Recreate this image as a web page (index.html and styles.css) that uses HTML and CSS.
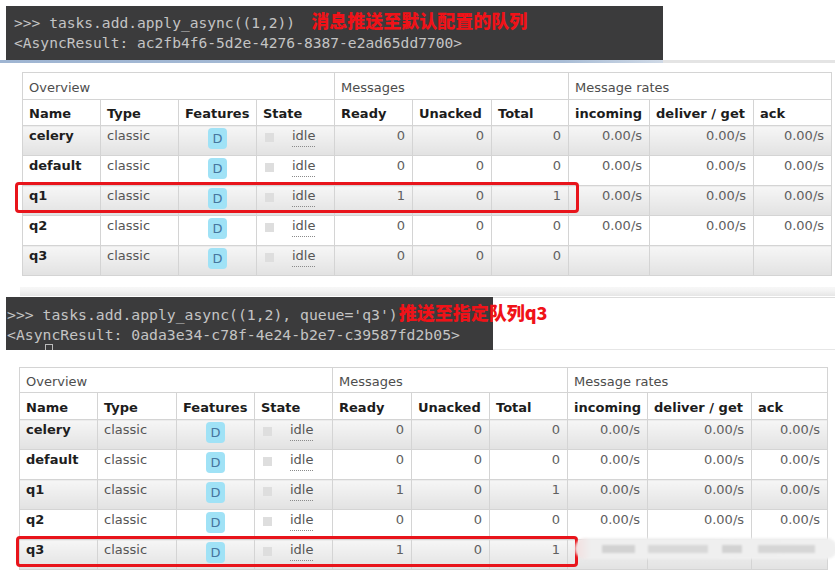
FILE: index.html
```html
<!DOCTYPE html>
<html>
<head>
<meta charset="utf-8">
<link rel="stylesheet" href="styles.css">
</head>
<body>
<div class="term-row">
  <div class="term term1">
    <div class="line">&gt;&gt;&gt; tasks.add.apply_async((1,2))<span class="note note1">消息推送至默认配置的队列</span></div>
    <div class="line">&lt;AsyncResult: ac2fb4f6-5d2e-4276-8387-e2ad65dd7700&gt;</div>
  </div>
</div>
<div class="strip1"><div class="blue"></div><div class="grey"></div></div>

<div class="table-wrap tw1">
  <table class="q t1">
    <colgroup><col style="width:78px"><col style="width:78px"><col style="width:78px"><col style="width:78px"><col style="width:78px"><col style="width:79px"><col style="width:77px"><col style="width:81px"><col style="width:104px"><col style="width:78px"></colgroup>
    <thead>
      <tr class="h1"><th colspan="4">Overview</th><th colspan="3">Messages</th><th colspan="3">Message rates</th></tr>
      <tr class="h2"><th>Name</th><th>Type</th><th>Features</th><th>State</th><th>Ready</th><th>Unacked</th><th>Total</th><th>incoming</th><th>deliver / get</th><th>ack</th></tr>
    </thead>
    <tbody>
      <tr class="odd"><td class="name">celery</td><td>classic</td><td class="feat"><span class="badge">D</span></td><td><span class="chk"></span><span class="idle">idle</span></td><td class="num">0</td><td class="num">0</td><td class="num">0</td><td class="num">0.00/s</td><td class="num">0.00/s</td><td class="num">0.00/s</td></tr>
      <tr><td class="name">default</td><td>classic</td><td class="feat"><span class="badge">D</span></td><td><span class="chk"></span><span class="idle">idle</span></td><td class="num">0</td><td class="num">0</td><td class="num">0</td><td class="num">0.00/s</td><td class="num">0.00/s</td><td class="num">0.00/s</td></tr>
      <tr class="odd"><td class="name">q1</td><td>classic</td><td class="feat"><span class="badge">D</span></td><td><span class="chk"></span><span class="idle">idle</span></td><td class="num">1</td><td class="num">0</td><td class="num">1</td><td class="num">0.00/s</td><td class="num">0.00/s</td><td class="num">0.00/s</td></tr>
      <tr><td class="name">q2</td><td>classic</td><td class="feat"><span class="badge">D</span></td><td><span class="chk"></span><span class="idle">idle</span></td><td class="num">0</td><td class="num">0</td><td class="num">0</td><td class="num">0.00/s</td><td class="num">0.00/s</td><td class="num">0.00/s</td></tr>
      <tr class="odd"><td class="name">q3</td><td>classic</td><td class="feat"><span class="badge">D</span></td><td><span class="chk"></span><span class="idle">idle</span></td><td class="num">0</td><td class="num">0</td><td class="num">0</td><td></td><td></td><td></td></tr>
    </tbody>
  </table>
  <div class="redbox rb1"></div>
</div>

<div class="sep"></div>

<div class="term-row2">
  <div class="term term2">
    <div class="line">&gt;&gt;&gt; tasks.add.apply_async((1,2), queue='q3')<span class="note note2">推送至指定队列q3</span></div>
    <div class="line">&lt;AsyncResult: 0ada3e34-c78f-4e24-b2e7-c39587fd2b05&gt;</div>
    <div class="cursor"></div>
  </div>
  <div class="filler"></div>
</div>

<div class="table-wrap tw2">
  <table class="q t2">
    <colgroup><col style="width:78px"><col style="width:79px"><col style="width:78px"><col style="width:78px"><col style="width:79px"><col style="width:78px"><col style="width:78px"><col style="width:80px"><col style="width:104px"><col style="width:76px"></colgroup>
    <thead>
      <tr class="h1"><th colspan="4">Overview</th><th colspan="3">Messages</th><th colspan="3">Message rates</th></tr>
      <tr class="h2"><th>Name</th><th>Type</th><th>Features</th><th>State</th><th>Ready</th><th>Unacked</th><th>Total</th><th>incoming</th><th>deliver / get</th><th>ack</th></tr>
    </thead>
    <tbody>
      <tr class="odd"><td class="name">celery</td><td>classic</td><td class="feat"><span class="badge">D</span></td><td><span class="chk"></span><span class="idle">idle</span></td><td class="num">0</td><td class="num">0</td><td class="num">0</td><td class="num">0.00/s</td><td class="num">0.00/s</td><td class="num">0.00/s</td></tr>
      <tr><td class="name">default</td><td>classic</td><td class="feat"><span class="badge">D</span></td><td><span class="chk"></span><span class="idle">idle</span></td><td class="num">0</td><td class="num">0</td><td class="num">0</td><td class="num">0.00/s</td><td class="num">0.00/s</td><td class="num">0.00/s</td></tr>
      <tr class="odd"><td class="name">q1</td><td>classic</td><td class="feat"><span class="badge">D</span></td><td><span class="chk"></span><span class="idle">idle</span></td><td class="num">1</td><td class="num">0</td><td class="num">1</td><td class="num">0.00/s</td><td class="num">0.00/s</td><td class="num">0.00/s</td></tr>
      <tr><td class="name">q2</td><td>classic</td><td class="feat"><span class="badge">D</span></td><td><span class="chk"></span><span class="idle">idle</span></td><td class="num">0</td><td class="num">0</td><td class="num">0</td><td class="num">0.00/s</td><td class="num">0.00/s</td><td class="num">0.00/s</td></tr>
      <tr class="odd"><td class="name">q3</td><td>classic</td><td class="feat"><span class="badge">D</span></td><td><span class="chk"></span><span class="idle">idle</span></td><td class="num">1</td><td class="num">0</td><td class="num">1</td><td></td><td></td><td></td></tr>
    </tbody>
  </table>
  <div class="redbox rb2"></div>
  <div class="blur">
    <span class="bb b1"></span><span class="bb b2"></span><span class="bb b3"></span><span class="bb b4"></span>
  </div>
</div>
</body>
</html>
```

FILE: styles.css
```css
* { box-sizing: border-box; }

html, body {
  margin: 0;
  background: #ffffff;
}

body {
  width: 835px;
  height: 571px;
  overflow: hidden;
  font-family: "DejaVu Sans", Verdana, sans-serif;
}

/* ---------- terminals ---------- */
.term-row {
  display: flex;
  padding: 6px 0 0 6px;
}

.term {
  background: #3b3b3c;
  color: #c4c4c4;
  font-family: "DejaVu Sans Mono", "Liberation Mono", monospace;
  font-size: 14.6px;
  line-height: 20px;
  white-space: nowrap;
}

.term1 {
  width: 657px;
  height: 54px;
  padding: 4px 0 0 8px;
}

.note {
  color: #f01218;
  font-family: "Noto Sans CJK SC", "DejaVu Sans", sans-serif;
  font-weight: 900;
  font-size: 18px;
  line-height: 20px;
}

.note1 { margin-left: 16px; }
.note2 { margin-left: 1px; }

.strip1 {
  display: flex;
  height: 3px;
}

.strip1 .blue {
  width: 663px;
  background: linear-gradient(to right, #9fb5d2, #a9bdd6 85%, #cfd9e6);
}

.strip1 .grey {
  flex: 1;
  background: #e4e4e4;
}

.sep {
  margin: 11px 0 0 20px;
  height: 9px;
  background: linear-gradient(#f7f7f7, #f3f3f3 40%, #e6e6e6);
}

.term-row2 {
  display: flex;
  margin-top: 1px;
}

.term2 {
  margin-left: 6px;
  width: 487px;
  height: 53px;
  padding: 5px 0 0 1px;
  font-size: 14.75px;
  position: relative;
}

.term2 .cursor {
  position: absolute;
  left: 39px;
  top: 47px;
  width: 8px;
  height: 6px;
  border: 1px solid #bbbbbb;
  border-bottom: none;
}

.filler {
  flex: 1;
  border-top: 1px solid #dcdcdc;
  border-bottom: 1px solid #e6e6e6;
}

/* ---------- tables ---------- */
.table-wrap {
  position: relative;
}

.tw1 {
  margin: 9px 0 0 22px;
}

.tw2 {
  margin: 17px 0 0 19px;
}

table.q {
  border-collapse: collapse;
  table-layout: fixed;
  font-size: 13px;
  color: #555555;
}

.t1 { width: 809px; }
.t2 { width: 808px; }

.q th,
.q td {
  border: 1px solid #d4d4d4;
  padding: 0 6px;
  vertical-align: top;
  line-height: 20px;
  text-align: left;
  white-space: nowrap;
  overflow: hidden;
}

.q .h1 th {
  font-weight: normal;
  color: #4d4d4d;
  background: #ffffff;
}

.q .h2 th {
  font-weight: bold;
  color: #1c1c1c;
  background: #ffffff;
}

.t1 .h1 { height: 27px; }
.t1 .h1 th { padding-top: 5px; }
.t1 .h2 { height: 26px; }
.t1 .h2 th { padding-top: 4px; }

.t2 .h1 { height: 25px; }
.t2 .h1 th { padding-top: 4px; }
.t2 .h2 { height: 27px; }
.t2 .h2 th { padding-top: 5px; }

.q tbody tr { height: 30px; }

.q tr.odd td {
  background: linear-gradient(#f6f6f6, #e2e2e2);
}

.q td.name {
  font-weight: bold;
  color: #1e1e1e;
}

.q td.num {
  text-align: right;
  padding-right: 7px;
  color: #606060;
}

.q td.feat {
  text-align: center;
}

.badge {
  display: inline-block;
  vertical-align: top;
  width: 19px;
  height: 21px;
  margin-top: 2px;
  padding-top: 1px;
  background: #a0e2f6;
  border-radius: 4px;
  color: #46769e;
  line-height: 20px;
  text-align: center;
}

.chk {
  display: inline-block;
  vertical-align: top;
  width: 9px;
  height: 9px;
  margin: 7px 0 0 2px;
  background: #dedede;
}

.idle {
  margin-left: 18px;
  padding-bottom: 3px;
  border-bottom: 1px dotted #8a8a8a;
  color: #555555;
}

/* ---------- overlays ---------- */
.redbox {
  position: absolute;
  border: 3px solid #e8141b;
  border-radius: 4px;
}

.rb1 {
  left: -7px;
  top: 110px;
  width: 564px;
  height: 31px;
}

.rb2 {
  left: -3px;
  top: 169px;
  width: 562px;
  height: 31px;
}

.blur {
  position: absolute;
  left: 556px;
  top: 171px;
  width: 262px;
  height: 21px;
  border-radius: 10px;
  background: linear-gradient(to right, #f2dede, #efefef 6%, #f0f0f0);
  filter: blur(1.2px);
}

.bb {
  position: absolute;
  top: 7px;
  height: 8px;
  background: #d2d2d2;
}

.b1 { left: 27px; width: 33px; }
.b2 { left: 73px; width: 60px; background: #d8d8d8; }
.b3 { left: 147px; width: 20px; }
.b4 { left: 183px; width: 57px; background: #d6d6d6; }
```
